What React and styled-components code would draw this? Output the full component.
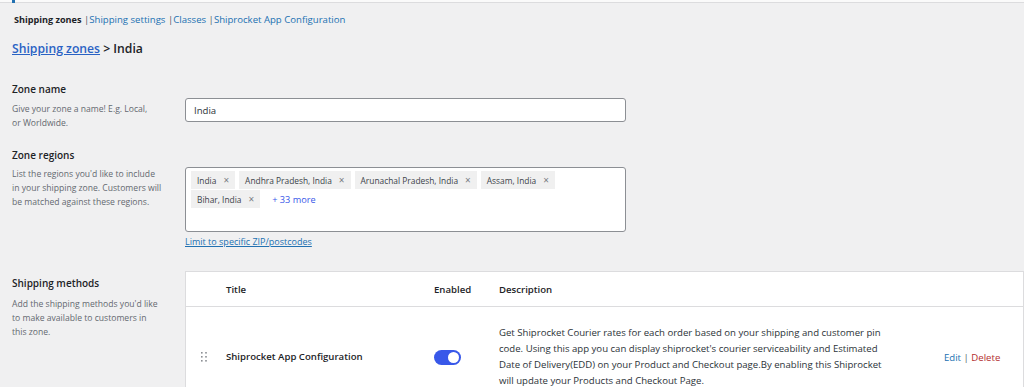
import React from 'react';
import styled, { createGlobalStyle } from 'styled-components';

const Global = createGlobalStyle`
  html, body {
    margin: 0;
    padding: 0;
    background: #f0f0f1;
    font-family: "Open Sans", "Noto Sans", sans-serif;
    color: #1d2327;
  }
`;

const Page = styled.div`
  width: 1024px;
  height: 387px;
  overflow: hidden;
  background: #f0f0f1;
`;

const TopBar = styled.div`
  height: 2px;
  background: #fafafa;
  border-bottom: 1px solid #dcdcde;
  display: flex;
`;

const TopMark = styled.div`
  margin-left: 12px;
  width: 3px;
  height: 3px;
  background: #2271b1;
`;

const Content = styled.div`
  padding: 0 3px 0 12px;
`;

const SubNav = styled.ul`
  list-style: none;
  margin: 0;
  padding: 10px 0 0 2px;
  display: flex;
  font-size: 9.6px;
  line-height: 14px;
  color: #50575e;
`;

const NavItem = styled.li`
  white-space: pre;
  a {
    color: #2271b1;
    text-decoration: none;
  }
  strong {
    color: #1d2327;
    font-weight: 700;
    font-size: 9.1px;
  }
`;

const Heading = styled.h2`
  margin: 13px 0 0;
  font-size: 12.2px;
  line-height: 18px;
  font-weight: 600;
  color: #1d2327;
  a {
    color: #2a62c4;
    text-decoration: underline;
  }
`;

const FormRow = styled.div`
  display: grid;
  grid-template-columns: 173px 1fr;
  margin-top: ${p => p.top}px;
`;

const LabelCol = styled.div`
  padding-right: 10px;
`;

const Label = styled.div`
  font-size: 10px;
  line-height: 14px;
  font-weight: 600;
  color: #1d2327;
`;

const Desc = styled.p`
  margin: ${p => p.gap}px 0 0;
  font-size: 8.6px;
  line-height: 14px;
  color: #646970;
`;

const FieldCol = styled.div`
  padding-top: ${p => Math.max(p.top, 0)}px;
  margin-top: ${p => Math.min(p.top, 0)}px;
`;

const TextInput = styled.div`
  box-sizing: border-box;
  width: 441px;
  height: 24px;
  background: #fff;
  border: 1px solid #8c8f94;
  border-radius: 3px;
  padding: 0 8px;
  display: flex;
  align-items: center;
  font-size: 9.6px;
  color: #2c3338;
`;

const RegionBox = styled.div`
  box-sizing: border-box;
  width: 441px;
  height: 65px;
  background: #fff;
  border: 1px solid #8c8f94;
  border-radius: 3px;
  padding: 3px 5px;
  display: flex;
  flex-wrap: wrap;
  align-content: flex-start;
  gap: 1px 4px;
`;

const Tag = styled.span`
  height: 18px;
  display: inline-flex;
  align-items: center;
  gap: 7px;
  padding: 0 6px;
  background: #f0f0f0;
  font-size: 8.4px;
  color: #3c434a;
  white-space: nowrap;
  span {
    color: #787c82;
    font-size: 10px;
  }
`;

const More = styled.span`
  height: 18px;
  display: inline-flex;
  align-items: center;
  padding: 0 8px;
  font-size: 9.2px;
  color: #3858e9;
`;

const LimitLink = styled.a`
  display: block;
  margin-top: 3px;
  font-size: 9px;
  line-height: 13px;
  color: #2271b1;
  text-decoration: underline;
`;

const Table = styled.div`
  width: 837px;
  background: #fff;
  border: 1px solid #dcdcde;
`;

const Row = styled.div`
  display: grid;
  grid-template-columns: 40px 208px 65px 445px 1fr;
  align-items: center;
  border-bottom: ${p => (p.head ? '1px solid #dcdcde' : 'none')};
  height: ${p => (p.head ? '34px' : 'auto')};
  padding: ${p => (p.head ? '0' : '18px 0')};
`;

const HeadCell = styled.div`
  font-size: 9.6px;
  font-weight: 600;
  color: #1d2327;
`;

const Cell = styled.div`
  font-size: 9.6px;
  color: #2c3338;
  line-height: 16px;
`;

const MethodTitle = styled(Cell)`
  font-weight: 600;
  color: #1d2327;
`;

const Handle = styled.div`
  display: flex;
  padding-left: 15px;
`;

const Toggle = styled.div`
  width: 27px;
  height: 15px;
  border-radius: 8px;
  background: #3858e9;
  display: flex;
  align-items: center;
  justify-content: flex-end;
  padding-right: 2px;
  box-sizing: border-box;
  &::after {
    content: '';
    width: 11px;
    height: 11px;
    border-radius: 50%;
    background: #fff;
  }
`;

const Actions = styled.div`
  font-size: 9.6px;
  color: #50575e;
  a { text-decoration: none; }
  a.edit { color: #2271b1; }
  a.del { color: #b32d2e; }
`;

const DragIcon = () => (
  <svg width="6" height="10" viewBox="0 0 6 10">
    {[0, 4, 8].map(y => (
      <g key={y} fill="#8c8f94">
        <rect x="0" y={y} width="1.6" height="1.6" />
        <rect x="4.2" y={y} width="1.6" height="1.6" />
      </g>
    ))}
  </svg>
);

const regions = ['India', 'Andhra Pradesh, India', 'Arunachal Pradesh, India', 'Assam, India', 'Bihar, India'];

export default function App() {
  return (
    <Page>
      <Global />
      <TopBar><TopMark /></TopBar>
      <Content>
        <SubNav>
          <NavItem><strong>Shipping zones</strong> |</NavItem>
          <NavItem><a href="#">Shipping settings</a> |</NavItem>
          <NavItem><a href="#">Classes</a> |</NavItem>
          <NavItem><a href="#">Shiprocket App Configuration</a></NavItem>
        </SubNav>
        <Heading><a href="#">Shipping zones</a> &gt; India</Heading>

        <FormRow top={24}>
          <LabelCol>
            <Label>Zone name</Label>
            <Desc gap={6}>Give your zone a name! E.g. Local,<br />or Worldwide.</Desc>
          </LabelCol>
          <FieldCol top={16}>
            <TextInput>India</TextInput>
          </FieldCol>
        </FormRow>

        <FormRow top={18}>
          <LabelCol>
            <Label>Zone regions</Label>
            <Desc gap={5}>List the regions you'd like to include<br />in your shipping zone. Customers will<br />be matched against these regions.</Desc>
          </LabelCol>
          <FieldCol top={19}>
            <RegionBox>
              {regions.map(r => (
                <Tag key={r}>{r}<span>×</span></Tag>
              ))}
              <More>+ 33 more</More>
            </RegionBox>
            <LimitLink href="#">Limit to specific ZIP/postcodes</LimitLink>
          </FieldCol>
        </FormRow>

        <FormRow top={28}>
          <LabelCol>
            <Label>Shipping methods</Label>
            <Desc gap={7}>Add the shipping methods you'd like<br />to make available to customers in<br />this zone.</Desc>
          </LabelCol>
          <FieldCol top={-5}>
            <Table>
              <Row head>
                <div />
                <HeadCell>Title</HeadCell>
                <HeadCell>Enabled</HeadCell>
                <HeadCell>Description</HeadCell>
                <div />
              </Row>
              <Row>
                <Handle><DragIcon /></Handle>
                <MethodTitle>Shiprocket App Configuration</MethodTitle>
                <div><Toggle /></div>
                <Cell>
                  Get Shiprocket Courier rates for each order based on your shipping and customer pin<br />
                  code. Using this app you can display shiprocket's courier serviceability and Estimated<br />
                  Date of Delivery(EDD) on your Product and Checkout page.By enabling this Shiprocket<br />
                  will update your Products and Checkout Page.
                </Cell>
                <Actions><a className="edit" href="#">Edit</a> | <a className="del" href="#">Delete</a></Actions>
              </Row>
            </Table>
          </FieldCol>
        </FormRow>
      </Content>
    </Page>
  );
}
